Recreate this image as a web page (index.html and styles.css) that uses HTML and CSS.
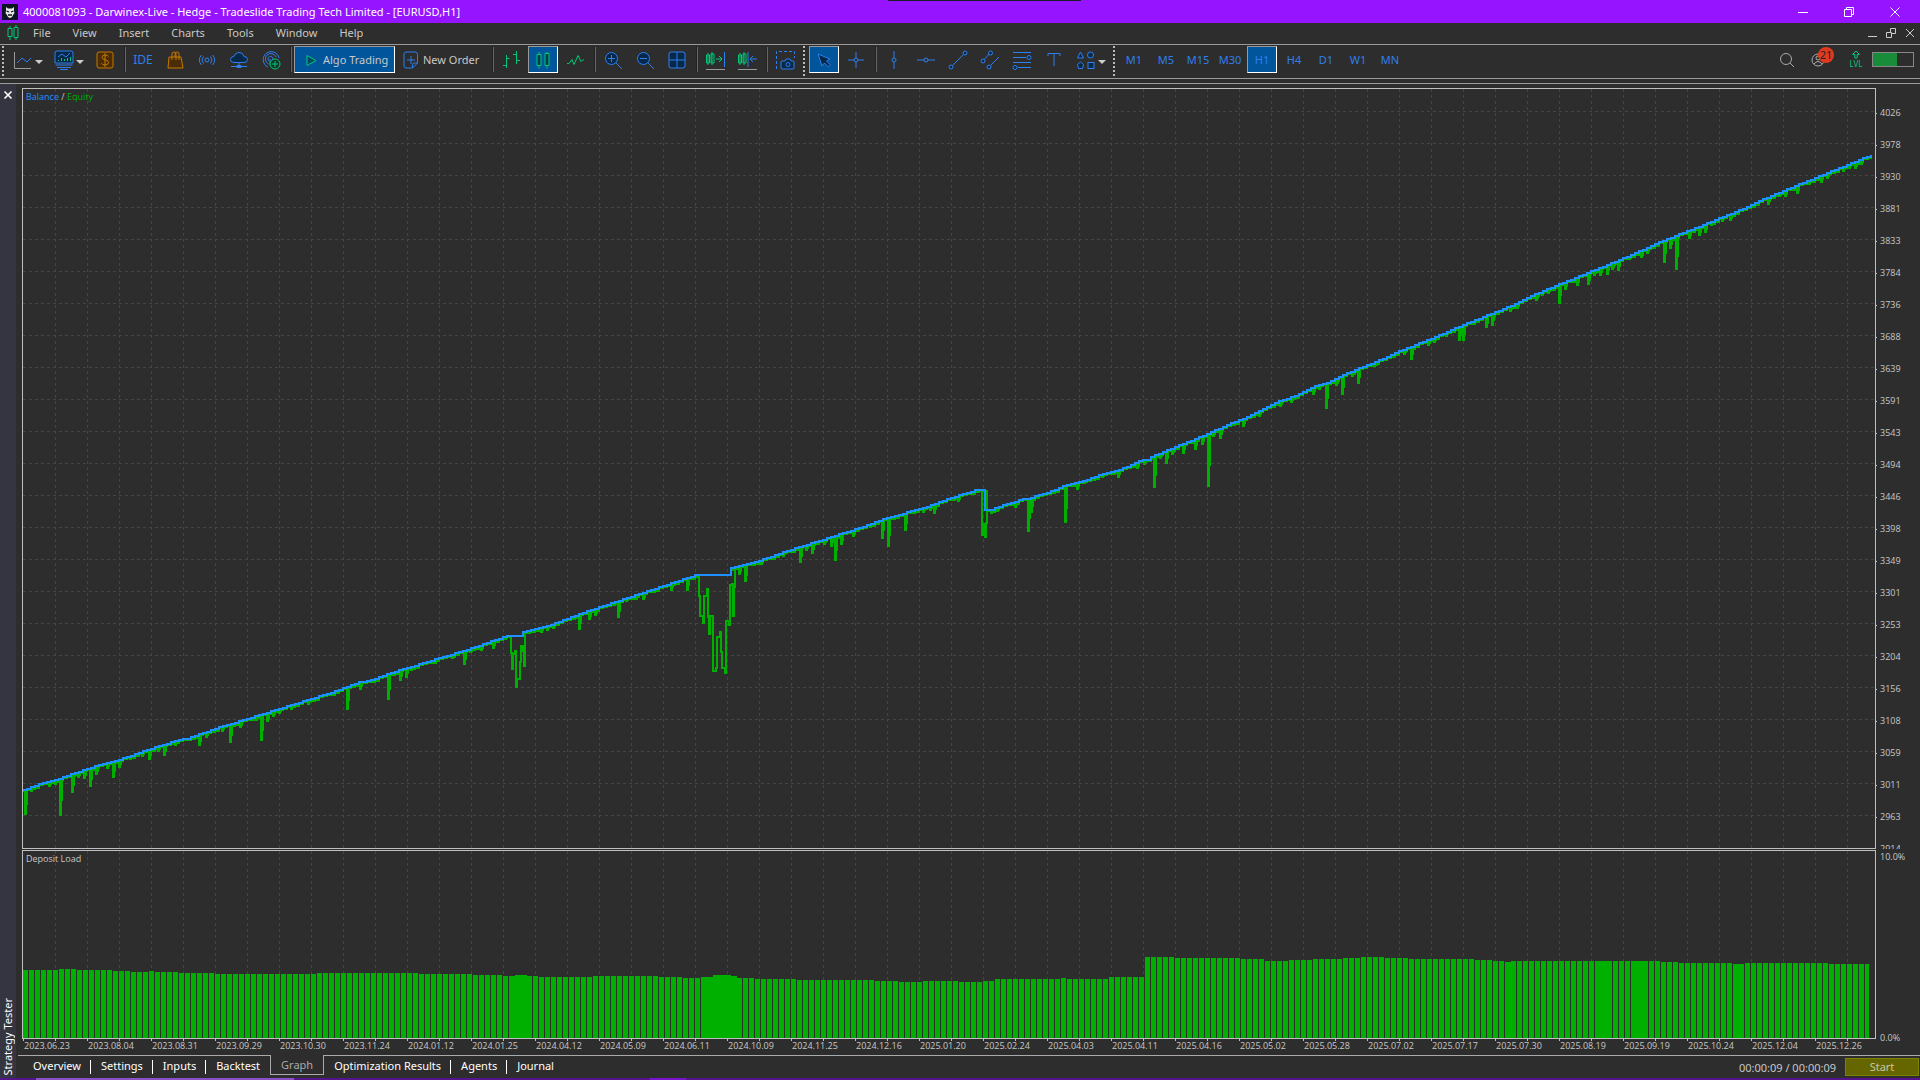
FILE: index.html
```html
<!DOCTYPE html>
<html lang="en">
<head>
<meta charset="utf-8">
<title>Strategy Tester</title>
<link rel="stylesheet" href="styles.css">
</head>
<body>
<header class="titlebar">
  <svg class="app-logo" viewBox="0 0 16 16"><rect width="16" height="16" fill="#0b1522"/><path d="M4 3l2 1.500h4L12 3v4l.5 2-1.500 2-1 2-2 1-2-1-1-2-1.500-2L4 7z" fill="#e8e8e8"/><path d="M4.500 7l2.500 1M11.500 7L9 8M6 11h4" stroke="#0b1522" stroke-width="1.300"/></svg>
  <h1 class="title">4000081093 - Darwinex-Live - Hedge - Tradeslide Trading Tech Limited - [EURUSD,H1]</h1>
  <span class="notch"></span>
  <div class="window-controls">
    <button class="win-btn" aria-label="Minimize"><svg viewBox="0 0 12 12"><path d="M1 6.500h10"/></svg></button>
    <button class="win-btn" aria-label="Restore"><svg viewBox="0 0 12 12"><path d="M1.500 3.500h7v7h-7zM3.500 3.500v-2h7v7h-2"/></svg></button>
    <button class="win-btn" aria-label="Close"><svg viewBox="0 0 12 12"><path d="M1.500 1.500l9 9M10.500 1.500l-9 9"/></svg></button>
  </div>
</header>

<nav class="menubar">
  <svg class="menu-logo" viewBox="0 0 12 16"><path d="M3 1v2M3 12v3M9 0v2M9 13v2M1 3.500h4v8H1zM7 2.500h4v10H7z"/></svg>
  <button class="menu-item">File</button>
  <button class="menu-item">View</button>
  <button class="menu-item">Insert</button>
  <button class="menu-item">Charts</button>
  <button class="menu-item">Tools</button>
  <button class="menu-item">Window</button>
  <button class="menu-item">Help</button>
  <div class="child-controls">
    <button class="child-btn" aria-label="Minimize chart"><svg viewBox="0 0 12 12"><path d="M2 9.500h9"/></svg></button>
    <button class="child-btn" aria-label="Restore chart"><svg viewBox="0 0 12 12"><path d="M1.500 5.500h5v5h-5zM5.500 5V1.500h5v5H7"/></svg></button>
    <button class="child-btn" aria-label="Close chart"><svg viewBox="0 0 12 12"><path d="M2 2l8 8M10 2l-8 8"/></svg></button>
  </div>
</nav>

<div class="toolbar">
  <span class="grip"></span>
  <button class="tool-drop" aria-label="Chart types"><svg class="icon" viewBox="0 0 24 24"><path d="M3.500 4v16.500H20" stroke="#999"/><path d="M6 15l5-5 5 4 4-4" class="b"/></svg><span class="arrow"></span></button>
  <button class="tool-drop" aria-label="Indicators"><svg class="icon" viewBox="0 0 24 24"><path d="M5 3h14q2 0 2 2v10H3V5q0-2 2-2z" class="bf"/><path d="M3.500 17h17M5 19.500h14M8 21.500h8" class="b"/><path d="M6 9l4-3 4 3 4-4" class="b"/><path d="M6.500 13v-1M9.500 13v-3M12.500 13v-2M15.500 13v-3M18.500 13V9" class="g"/></svg><span class="arrow"></span></button>
  <button class="tool" aria-label="Market"><svg class="icon" viewBox="0 0 24 24"><rect x="4" y="4" width="16" height="16" rx="2" class="of"/><path d="M15.500 8.500q-1-1.500-3.500-1.500-3 0-3 2.300 0 2 3 2.500 3.500.5 3.500 2.700T12 17q-2.800 0-3.500-1.700M12 5v14" class="o"/></svg></button>
  <span class="sep"></span>
  <button class="tool ide">IDE</button>
  <button class="tool" aria-label="Store"><svg class="icon" viewBox="0 0 24 24"><path d="M6 9h12l2 11H5z" class="of"/><path d="M9 12V6q0-2 2-2t2 2v6M12 9V6q0-2 2-2t2 2v6" class="o"/></svg></button>
  <button class="tool" aria-label="Signals"><svg class="icon" viewBox="0 0 24 24"><circle cx="12" cy="12" r="2" class="b"/><path d="M8.500 8.500q-3 3.500 0 7M6.500 7q-4.500 5 0 10M15.500 8.500q3 3.500 0 7M17.500 7q4.500 5 0 10" class="b"/></svg></button>
  <button class="tool" aria-label="Cloud"><svg class="icon" viewBox="0 0 24 24"><path d="M7 14.500q-3.500 0-3.500-3T7 8.500q1-4 5-4t5 4q3.500 0 3.500 3t-3.500 3z" class="bf"/><path d="M12 14.500v3M4 18.500h16M10 17.500h4v2h-4z" class="b"/></svg></button>
  <button class="tool" aria-label="Hosting"><svg class="icon" viewBox="0 0 24 24"><path d="M9 19a8 8 0 1 1 11-9M9.500 16a5.500 5.500 0 1 1 7.500-7M10 13a2.500 2.500 0 1 1 4-2M11 11v6" class="b"/><circle cx="16" cy="16" r="5" fill="#0c3a2a" class="g"/><path d="M16 13v6M13 16h6" class="g"/></svg></button>
  <span class="sep"></span>
  <button class="tool-text active algo"><svg class="icon" viewBox="0 0 24 24"><path d="M8 7.500v10l9-5z" fill="#044a60" class="g"/></svg>Algo Trading</button>
  <button class="tool-text"><svg class="icon" viewBox="0 0 24 24"><path d="M7 4h9q2.500 0 2.500 2.500V15l-5 5H7q-2 0-2-2V6q0-2 2-2zM18.500 15h-3q-2 0-2 2v3M12 8v8M8 12h8" class="b"/></svg>New Order</button>
  <span class="sep"></span>
  <button class="tool" aria-label="Bar chart"><svg class="icon" viewBox="0 0 24 24"><path d="M7.500 7v13M7.500 10.500h3M4 17.500h3.500M17.500 3v13M14 6.500h3.500M17.500 12.500H21" class="g"/></svg></button>
  <button class="tool active" aria-label="Candlesticks"><svg class="icon" viewBox="0 0 24 24"><path d="M8 4v2.500M8 18v2.500M16 4v1.500M16 18v2.500" class="g"/><path d="M6 6.500h4v11H6zM14 5.500h4v12h-4z" fill="#04404a" class="g"/></svg></button>
  <button class="tool" aria-label="Line chart"><svg class="icon" viewBox="0 0 24 24"><path d="M4 15.500h2l3-4 2 5 4-9 3 6 1.500-1.500H21" class="g"/></svg></button>
  <span class="sep"></span>
  <button class="tool" aria-label="Zoom in"><svg class="icon" viewBox="0 0 24 24"><circle cx="10.500" cy="10.500" r="6" class="bf"/><path d="M15 15l6 6M7 10.500h7M10.500 7v7" class="b"/></svg></button>
  <button class="tool" aria-label="Zoom out"><svg class="icon" viewBox="0 0 24 24"><circle cx="10.500" cy="10.500" r="6" class="bf"/><path d="M15 15l6 6M7 10.500h7" class="b"/></svg></button>
  <button class="tool" aria-label="Tile windows"><svg class="icon" viewBox="0 0 24 24"><rect x="4" y="4" width="16" height="16" rx="2" class="bf"/><path d="M12 4v16M4 12h16" class="b"/></svg></button>
  <span class="sep"></span>
  <button class="tool" aria-label="Auto scroll"><svg class="icon" viewBox="0 0 24 24"><path d="M5 5v12M9 4v13M3.500 7h3v8h-3zM8 6h3v9H8zM13 11h6M16 8l3 3-3 3" class="g"/><path d="M21.500 4v15" class="b"/><path d="M3 21.500h19" stroke="#999"/></svg></button>
  <button class="tool" aria-label="Chart shift"><svg class="icon" viewBox="0 0 24 24"><path d="M5 5v12M9 4v13M3.500 7h3v8h-3zM8 6h3v9H8z" class="g"/><path d="M13 4v15M15.500 11H22M18 8l-3 3 3 3" class="b"/><path d="M3 21.500h19" stroke="#999"/></svg></button>
  <span class="sep"></span>
  <button class="tool" aria-label="Screenshot"><svg class="icon" viewBox="0 0 24 24"><path d="M3.500 21V3.500h18V10" stroke-dasharray="3 2" class="b"/><path d="M9 13h3l1-2h4l1 2h2q1 0 1 1v6q0 1-1 1h-11q-1 0-1-1v-6q0-1 1-1z" class="bf"/><circle cx="15" cy="16.500" r="2" class="b"/></svg></button>
  <span class="grip"></span>
  <button class="tool active" aria-label="Cursor"><svg class="icon" viewBox="0 0 24 24"><path d="M6 6l4 12 2.500-3 4 4 2-2-4-4 3.500-2z" class="bf"/></svg></button>
  <button class="tool" aria-label="Crosshair"><svg class="icon" viewBox="0 0 24 24"><path d="M12 4v6M12 14v6M4 12h6M14 12h6" class="b"/><circle cx="12" cy="12" r="2" class="b"/></svg></button>
  <span class="sep"></span>
  <button class="tool" aria-label="Vertical line"><svg class="icon" viewBox="0 0 24 24"><path d="M12 3v7M12 14v7" class="b"/><circle cx="12" cy="12" r="2" class="b"/></svg></button>
  <button class="tool" aria-label="Horizontal line"><svg class="icon" viewBox="0 0 24 24"><path d="M3 12h7M14 12h7" class="b"/><circle cx="12" cy="12" r="2" class="b"/></svg></button>
  <button class="tool" aria-label="Trend line"><svg class="icon" viewBox="0 0 24 24"><path d="M6 18L18 6" class="b"/><circle cx="5" cy="19" r="2" class="bf"/><circle cx="19" cy="5" r="2" class="bf"/></svg></button>
  <button class="tool" aria-label="Channel"><svg class="icon" viewBox="0 0 24 24"><path d="M5 13l7-8M11 19L21 9" class="b"/><circle cx="5" cy="13" r="2" class="bf"/><circle cx="12.500" cy="5" r="2" class="bf"/><circle cx="11" cy="19" r="2" class="bf"/></svg></button>
  <button class="tool" aria-label="Fibonacci"><svg class="icon" viewBox="0 0 24 24"><path d="M3 4.500h18M3 9.500h13M3 14.500h18M8 19.500h13" class="b"/><circle cx="19" cy="9.500" r="2" class="bf"/><circle cx="5" cy="19.500" r="2" class="bf"/></svg></button>
  <button class="tool" aria-label="Text"><svg class="icon" viewBox="0 0 24 24"><path d="M6 8V5.500h12V8M12 5.500V18" class="b"/></svg></button>
  <button class="tool-drop" aria-label="Shapes"><svg class="icon" viewBox="0 0 24 24"><path d="M6.500 4l3 6h-6z" class="bf"/><circle cx="16.500" cy="7" r="3" class="bf"/><path d="M6.500 14l3 2.500-1 4h-4l-1-4z" class="bf"/><rect x="14" y="14.500" width="6" height="6" class="bf"/></svg><span class="arrow"></span></button>
  <span class="grip"></span>
  <button class="tool">M1</button>
  <button class="tool">M5</button>
  <button class="tool">M15</button>
  <button class="tool">M30</button>
  <button class="tool active">H1</button>
  <button class="tool">H4</button>
  <button class="tool">D1</button>
  <button class="tool">W1</button>
  <button class="tool">MN</button>
  <div class="status">
    <button class="status-btn" aria-label="Search"><svg class="icon" viewBox="0 0 24 24"><circle cx="11" cy="11" r="5.500" stroke="#aaa"/><path d="M15 15l4 4" stroke="#aaa"/></svg></button>
    <button class="status-btn account" aria-label="Notifications"><svg class="icon" viewBox="0 0 24 24"><circle cx="11" cy="12" r="6" stroke="#aaa"/><circle cx="11" cy="10" r="2" stroke="#aaa"/><path d="M7 16q4-5 8 0" stroke="#aaa"/></svg><span class="badge">21</span></button>
    <div class="level"><svg viewBox="0 0 10 9"><path d="M5 1L1.500 4.500h2.300V8h2.400V4.500h2.300z" class="g"/></svg>LVL</div>
    <div class="battery"><span class="charge"></span></div>
  </div>
</div>

<main class="tester">
  <aside class="rail">
    <button class="rail-close" aria-label="Close panel"><svg viewBox="0 0 10 10"><path d="M1.500 1.500l7 7M8.500 1.500l-7 7"/></svg></button>
    <span class="rail-title">Strategy Tester</span>
  </aside>
  <section class="content">
    <div class="panel balance">
      <div class="plot">
        <svg id="balance" viewBox="0 0 1852 759" preserveAspectRatio="none"></svg>
        <p class="legend"><span class="blue">Balance</span> / <span class="green">Equity</span></p>
      </div>
      <div class="y-scale">
      <ol class="y-axis">
        <li>4026</li><li>3978</li><li>3930</li><li>3881</li><li>3833</li><li>3784</li><li>3736</li><li>3688</li><li>3639</li><li>3591</li><li>3543</li><li>3494</li><li>3446</li><li>3398</li><li>3349</li><li>3301</li><li>3253</li><li>3204</li><li>3156</li><li>3108</li><li>3059</li><li>3011</li><li>2963</li><li>2914</li>
      </ol>
      </div>
    </div>
    <div class="panel load">
      <div class="plot">
        <svg id="load" viewBox="0 0 1852 187" preserveAspectRatio="none"></svg>
        <p class="legend">Deposit Load</p>
      </div>
      <div class="load-axis"><span>10.0%</span><span>0.0%</span></div>
    </div>
    <ol class="x-axis">
      <li>2023.06.23</li><li>2023.08.04</li><li>2023.08.31</li><li>2023.09.29</li><li>2023.10.30</li><li>2023.11.24</li><li>2024.01.12</li><li>2024.01.25</li><li>2024.04.12</li><li>2024.05.09</li><li>2024.06.11</li><li>2024.10.09</li><li>2024.11.25</li><li>2024.12.16</li><li>2025.01.20</li><li>2025.02.24</li><li>2025.04.03</li><li>2025.04.11</li><li>2025.04.16</li><li>2025.05.02</li><li>2025.05.28</li><li>2025.07.02</li><li>2025.07.17</li><li>2025.07.30</li><li>2025.08.19</li><li>2025.09.19</li><li>2025.10.24</li><li>2025.12.04</li><li>2025.12.26</li>
    </ol>
    <footer class="tabbar">
      <div class="tabs">
        <button class="tab">Overview</button>
        <button class="tab">Settings</button>
        <button class="tab">Inputs</button>
        <button class="tab last">Backtest</button>
        <button class="tab current">Graph</button>
        <button class="tab">Optimization Results</button>
        <button class="tab">Agents</button>
        <button class="tab last">Journal</button>
      </div>
      <span class="elapsed">00:00:09 / 00:00:09</span>
      <button class="start">Start</button>
    </footer>
  </section>
</main>
<div class="taskbar-edge"><span class="task wide"></span><span class="task"></span></div>
<script src="chart.js"></script>
</body>
</html>
```
FILE: styles.css
```css
* { box-sizing: border-box; }
body {
  margin: 0;
  height: 100vh;
  display: flex;
  flex-direction: column;
  background: #2d2d2d;
  color: #c8c8c8;
  font: 12px/16px "Noto Sans", "Open Sans", sans-serif;
  overflow: hidden;
}
button {
  margin: 0;
  padding: 0;
  border: 0;
  background: none;
  color: inherit;
  font: inherit;
}
svg { display: block; fill: none; }
ol { margin: 0; padding: 0; list-style: none; }
p { margin: 0; }

/* title bar */
.titlebar {
  flex: none;
  position: relative;
  display: flex;
  align-items: center;
  height: 23px;
  padding: 0 2px;
  background: #9614ff;
  color: #fff;
}
.app-logo { width: 16px; height: 16px; }
.title { margin: 0 0 0 5px; font-size: 11px; font-weight: 400; white-space: nowrap; }
.notch { position: absolute; top: 0; left: 888px; width: 193px; height: 1px; background: #1a1a2a; }
.window-controls { display: flex; margin-left: auto; }
.win-btn { width: 46px; height: 20px; display: grid; place-items: center; }
.win-btn svg { width: 12px; height: 12px; stroke: #fff; }

/* menu */
.menubar {
  flex: none;
  display: flex;
  align-items: center;
  height: 21px;
  padding: 0 4px 2px 7px;
}
.menu-logo { width: 12px; height: 16px; margin-right: 3px; stroke: #00c878; }
.menu-item { padding: 0 11px; font-size: 11px; }
.child-controls { display: flex; gap: 7px; margin-left: auto; }
.child-btn svg { width: 12px; height: 12px; stroke: #ccc; }

/* toolbar */
.toolbar {
  flex: none;
  display: flex;
  height: 35px;
  padding: 1px 6px 0 1px;
  border: solid #999;
  border-width: 1px 0;
  font-size: 11px;
}
.tool, .tool-drop, .tool-text {
  flex: none;
  display: flex;
  align-items: center;
  justify-content: center;
  width: 30px;
  height: 27px;
  margin-right: 2px;
  color: #2f7fee;
}
.tool-drop { width: 39px; padding-left: 3px; justify-content: flex-start; }
.tool-text { width: 93px; padding-left: 4px; justify-content: flex-start; color: #c8c8c8; white-space: nowrap; }
.algo { width: 101px; margin-right: 0; }
.active { background: #00559b; border: 1px solid #999; border-right-color: #fff; border-bottom-color: #fff; }
.ide { font-size: 12px; }
.arrow { border: 4px solid transparent; border-top-color: #ccc; border-bottom: 0; margin-top: 4px; }
.sep { flex: none; width: 2px; height: 25px; margin: 1px 2px 0; background: #666; border-left: 1px solid #222; }
.grip {
  flex: none;
  width: 2px;
  height: 30px;
  margin: 0 4px 0 1px;
  background: repeating-linear-gradient(#bbb 0 2px, transparent 2px 4px);
}
.icon { flex: none; width: 24px; height: 24px; }
.b, .bf { stroke: #2f7fee; }
.bf { fill: #06294a; }
.g { stroke: #00c878; }
.o, .of { stroke: #c87800; }
.of { fill: #4a2d06; }
.status { display: flex; align-items: flex-start; margin-left: auto; }
.status-btn { width: 32px; height: 27px; display: grid; place-items: center; }
.account { position: relative; margin-right: 14px; }
.badge {
  position: absolute;
  top: 1px;
  left: 15px;
  width: 16px;
  height: 16px;
  border-radius: 8px;
  background: #e03a1e;
  color: #222;
  font-size: 11px;
}
.level { width: 14px; padding-top: 4px; color: #00c878; font-size: 8px; line-height: 9px; text-align: center; }
.level svg { width: 10px; height: 9px; margin: 0 auto; }
.battery { width: 42px; height: 15px; margin: 6px 0 0 9px; border: 1px solid #888; }
.charge { display: block; width: 24px; height: 13px; background: #188c38; }

/* tester window */
.tester { flex: 1; min-height: 0; display: flex; margin-top: 4px; border-top: 1px solid #999; }
.rail {
  width: 16px;
  display: flex;
  flex-direction: column;
  align-items: center;
  justify-content: space-between;
  padding: 6px 0 3px;
  background: #343541;
  color: #fff;
}
.rail-close svg { width: 10px; height: 10px; stroke: #fff; stroke-width: 1.6px; }
.rail-title { writing-mode: vertical-rl; transform: rotate(180deg); font-size: 11px; line-height: 16px; }
.content { flex: 1; display: flex; flex-direction: column; min-width: 0; padding: 4px 0 0 2px; }
.panel { display: flex; padding-left: 4px; font: 9px/12px "Open Sans", "Noto Sans", sans-serif; }
.balance { flex: 1; min-height: 0; margin-bottom: 1px; }
.load { flex: none; height: 189px; }
.plot { position: relative; flex: 1; border: 1px solid #c0c0c0; }
.plot svg { position: absolute; width: 100%; height: 100%; shape-rendering: crispEdges; }
.legend { position: absolute; top: 2px; left: 3px; }
.blue { color: #1e90ff; }
.green { color: #00a800; }
.grid-line { stroke: #444; stroke-dasharray: 3 3; }
.equity { stroke: #00b000; stroke-width: 2; }
.deposit { stroke: #1e90ff; stroke-width: 2; }
.bars { fill: #00b000; }
.y-scale { width: 44px; overflow: hidden; }
.y-axis {
  height: calc(100% + 16px);
  display: grid;
  grid-template-rows: repeat(24, 1fr);
  align-items: center;
  padding-top: 9px;
}
.y-axis li { display: flex; align-items: center; gap: 3px; }
.y-axis li::before { content: ""; width: 1px; height: 1px; background: #c0c0c0; }
.load-axis {
  width: 44px;
  display: flex;
  flex-direction: column;
  justify-content: space-between;
  height: 194px;
  padding: 1px 0 0 4px;
}
.x-axis {
  flex: none;
  display: grid;
  grid-template-columns: repeat(29, 1fr);
  height: 16px;
  margin: 0 41px 0 5px;
  font: 9px/13px "Open Sans", "Noto Sans", sans-serif;
}
.x-axis li {
  padding-left: 1px;
  background: linear-gradient(#c0c0c0, #c0c0c0) 0 0 / 1px 2px no-repeat, linear-gradient(#c0c0c0, #c0c0c0) 50% 0 / 1px 2px no-repeat;
}
.tabbar { flex: none; display: flex; height: 23px; border-top: 1px solid #aaa; }
.tabs { display: flex; align-items: flex-start; padding-left: 5px; }
.tab { height: 20px; margin-top: -1px; padding: 0 10px; position: relative; color: #fff; font-size: 11px; line-height: 19px; }
.tab:not(.last, .current)::after { content: ""; position: absolute; right: 0; top: 5px; width: 1px; height: 14px; background: #fff; }
.current { background: #2d2d2d; border: 1px solid #aaa; border-top: 0; color: #aaa; }
.elapsed { margin: 4px 9px 0 auto; font-size: 11px; }
.start { width: 74px; height: 18px; margin: 2px 1px 0 0; background: #666600; border: 1px solid #808000; color: #c8c8a0; font-size: 11px; }
.taskbar-edge { flex: none; display: flex; height: 2px; background: #55148c; }
.task { width: 36px; margin-left: 356px; background: #7a14cc; }
.wide { width: 258px; margin-left: 36px; background: #8a50c8; }
```
FILE: chart.js
```js
// Plot origin in window units; all series below use the same units.
const X0 = 23, Y0 = 89, LOAD_Y0 = 851, W = 1852, H = 759, LOAD_H = 187;

const balance = [
  [23,790],[46,782],[61,778],[86,769],[118,760],[150,749],[179,740],[186,739],[214,729],[250,718],[279,709],[307,700],
  [327,694],[347,687],[360,682],[365,682],[400,670],[430,661],[463,651],[507,636],[522,636],[523,632],[547,626],[579,614],
  [618,601],[654,589],[696,575],[730,575],[731,568],[753,563],[787,551],[828,538],[868,525],[883,519],[905,513],[923,508],
  [947,499],[976,490],[984,490],[985,510],[990,510],[1010,503],[1020,500],[1030,498],[1034,496],[1049,492],[1069,484],
  [1087,480],[1105,473],[1118,470],[1130,466],[1138,461],[1147,460],[1153,456],[1177,446],[1200,437],[1227,425],[1240,420],
  [1280,401],[1300,394],[1313,387],[1330,382],[1343,375],[1360,368],[1380,360],[1400,351],[1440,335],[1463,325],[1493,313],
  [1513,305],[1533,295],[1560,284],[1587,273],[1617,261],[1647,248],[1660,242],[1680,234],[1693,229],[1717,219],[1740,210],
  [1757,202],[1783,191],[1800,184],[1827,173],[1847,165],[1871,155]
];

const dips = [
  [25,815],[31,792],[49,787],[55,785],[60,816],[72,793],[78,778],[84,779],[90,787],[96,775],[107,769],[113,778],[119,768],
  [130,760],[142,757],[149,760],[158,752],[164,756],[175,746],[199,746],[206,738],[222,732],[230,743],[240,728],[256,721],
  [261,741],[267,722],[273,717],[279,714],[291,710],[308,705],[347,710],[354,688],[360,690],[388,700],[400,681],[406,678],
  [411,671],[435,664],[452,659],[464,665],[470,653],[481,651],[493,649],[505,640],[529,634],[541,633],[547,631],[553,629],
  [579,630],[589,620],[595,616],[618,618],[626,602],[636,600],[643,600],[652,593],[671,591],[687,591],[739,575],[745,582],
  [761,565],[783,557],[800,563],[806,551],[812,554],[824,545],[831,547],[835,561],[841,545],[853,537],[870,528],[882,539],
  [888,547],[905,531],[923,513],[930,511],[934,514],[958,502],[991,514],[997,512],[1015,508],[1028,532],[1031,513],
  [1065,523],[1077,490],[1084,484],[1102,478],[1118,478],[1137,469],[1144,465],[1154,488],[1160,459],[1166,464],[1172,455],
  [1183,454],[1195,450],[1202,445],[1208,487],[1213,437],[1220,439],[1230,427],[1243,427],[1259,417],[1280,407],[1291,403],
  [1313,395],[1319,390],[1326,409],[1336,386],[1342,395],[1352,377],[1358,384],[1376,366],[1404,355],[1411,360],[1428,346],
  [1434,343],[1446,337],[1459,341],[1463,341],[1486,328],[1492,326],[1510,312],[1517,309],[1536,301],[1542,296],[1548,294],
  [1559,304],[1565,290],[1577,286],[1588,285],[1594,276],[1600,276],[1607,275],[1612,270],[1618,271],[1629,260],[1641,258],
  [1647,254],[1664,263],[1670,249],[1676,270],[1689,239],[1699,236],[1705,233],[1711,226],[1722,222],[1730,221],[1768,205],
  [1779,197],[1785,197],[1797,194],[1809,185],[1821,183],[1827,179],[1843,172],[1849,169],[1855,169],[1861,165],[1867,160]
];

// Longer drawdowns, each traced point by point.
const drawdowns = [
  [[511,637],[511,653],[512,669],[513,654],[515,651],[516,687],[517,679],[519,679],[520,662],[521,646],[523,651],[524,666],[525,633]],
  [[699,576],[699,596],[700,616],[703,623],[704,596],[707,589],[708,617],[709,634],[710,616],[712,616],[713,671],[716,668],[717,637],
   [720,632],[721,652],[722,668],[725,673],[726,621],[729,625],[730,585],[732,584],[733,616],[734,587],[735,569]],
  [[982,492],[982,535],[984,524],[985,537],[986,523],[987,512]]
];

// [start x, top y] of each level of the deposit load.
const load = [
  [23,970],[57,969],[73,970],[110,971],[130,972],[148,971],[155,972],[175,973],[213,974],[317,973],[415,974],[472,975],[501,976],
  [511,975],[524,976],[540,977],[590,976],[656,977],[684,978],[699,977],[712,975],[727,976],[734,978],[752,979],[795,980],
  [873,981],[896,982],[919,981],[955,982],[984,981],[995,979],[1057,978],[1066,979],[1110,977],[1146,957],[1175,958],[1238,959],
  [1265,961],[1288,960],[1310,959],[1340,958],[1362,957],[1383,958],[1410,959],[1475,960],[1490,961],[1504,962],[1512,961],
  [1660,962],[1679,963],[1731,964],[1743,963],[1830,964],[1869,964]
];
const solid = [[508,525],[700,736],[1504,1513],[1598,1608],[1633,1643],[1732,1741]];

function yAt(x) {
  let i = 1;
  while (i < balance.length - 1 && balance[i][0] < x) i++;
  const [xa, ya] = balance[i - 1], [xb, yb] = balance[i];
  return Math.round(ya + (yb - ya) * Math.min(1, Math.max(0, (x - xa) / (xb - xa))));
}

function add(svg, d, cls) {
  const p = document.createElementNS("http://www.w3.org/2000/svg", "path");
  p.setAttribute("d", d);
  p.setAttribute("class", cls);
  svg.appendChild(p);
}

function grid(svg, h, rows) {
  for (let x = 32; x < W; x += 32) add(svg, `M${x + 0.5} 0V${h}`, "grid-line");
  if (rows) for (let y = 22; y < h - 2; y += 32) add(svg, `M0 ${y + 0.5}H${W}`, "grid-line");
}

const main = document.getElementById("balance");
grid(main, H, true);

let blue = `M0 ${yAt(23) - Y0}`;
let green = `M0 ${yAt(23) + 2 - Y0}`;
for (let x = 23; x <= 1871; x += 2) {
  if (x % 4 === 3 || (x > 982 && x < 988)) blue += `H${x - X0}V${yAt(x) - Y0}`;
  if (x % 4 === 3) green += `H${x - X0}V${yAt(x) + 1 + (x % 5 < 2 ? 1 : 0) - Y0}`;
}
for (const [x, y] of dips) {
  const top = yAt(x) + 1, mid = Math.round(top + (y - top) * 0.6);
  for (const [dx, end] of [[0, y], [1, y], [2, mid]]) green += `M${x + dx - X0} ${top - Y0}V${end - Y0}`;
}
for (const line of drawdowns) {
  green += line.map(([x, y], i) => i ? `H${x - X0}V${y - Y0}` : `M${x - X0} ${y - Y0}`).join("");
}
// The equity trace has no baseline of its own while a drawdown runs.
for (const [from, to] of [[511, 525], [699, 734]]) {
  green = green.replace(/H(\d+)V(\d+)/g, (m, x, y) =>
    +x > from - X0 && +x < to - X0 && +y < yAt(+x + X0) + 5 - Y0 ? `M${x} ${y}` : m);
}
add(main, green, "equity");
add(main, blue, "deposit");

const loadSvg = document.getElementById("load");
grid(loadSvg, LOAD_H, false);
let bars = "";
for (let x = 23; x < 1869; x += 6) {
  const level = load.filter(([s]) => s <= x + 1).pop()[1] - LOAD_Y0;
  const filled = solid.some(([a, b]) => x >= a - 3 && x < b - 3);
  bars += `M${x - X0} ${LOAD_H}V${level}h${Math.min(filled ? 6 : 5, 1869 - x)}V${LOAD_H}z`;
}
add(loadSvg, bars, "bars");
```
